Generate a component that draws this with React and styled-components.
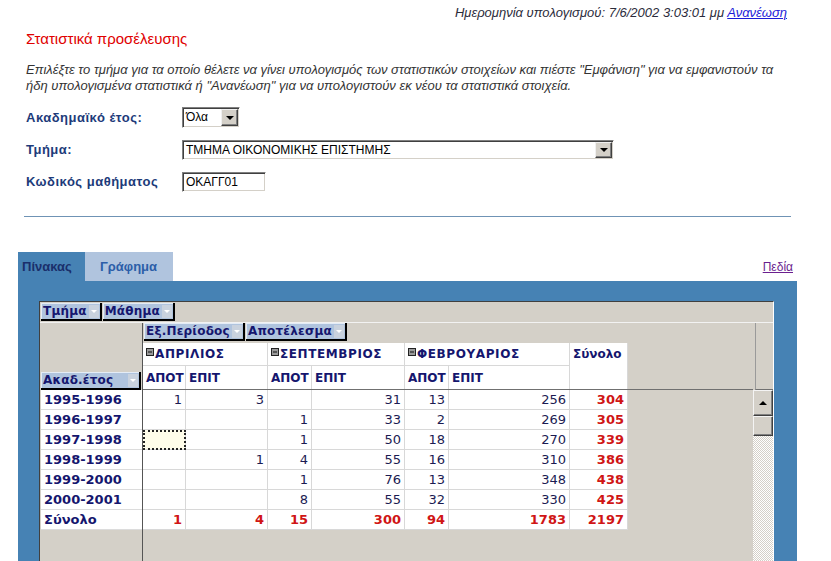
import React from "react";
import styled, { createGlobalStyle } from "styled-components";

const NAVY = "#15166e";
const RED = "#d01515";

const GlobalStyle = createGlobalStyle`
  html, body { margin: 0; padding: 0; background: #fff; }
  body {
    font-family: "Liberation Sans", Arial, sans-serif;
    font-size: 12px;
    color: #333;
    overflow: hidden;
  }
`;

const Page = styled.div`
  width: 779px;
  padding-left: 18px;
`;

const Top = styled.div`
  padding: 5px 10px 0 8px;
`;

const DateLine = styled.div`
  text-align: right;
  font-style: italic;
  font-size: 13px;
  line-height: 16px;
  color: #2b2b3b;
`;

const Link = styled.a`
  color: ${(p) => (p.$visited ? "#6b1f8f" : "#1b1bd8")};
  text-decoration: underline;
  font-style: ${(p) => (p.$visited ? "normal" : "inherit")};
  cursor: pointer;
`;

const Title = styled.div`
  margin-top: 10px;
  color: #e00000;
  font-size: 15px;
  line-height: 16px;
`;

const Intro = styled.p`
  margin: 15px 0 0;
  font-style: italic;
  font-size: 13px;
  line-height: 16px;
  color: #333;
  white-space: nowrap;
`;

const Form = styled.div`
  margin-top: 13px;
  display: grid;
  grid-template-columns: 156px auto;
  grid-auto-rows: 21px;
  row-gap: 11px;
  align-items: center;
  justify-items: start;
`;

const Label = styled.div`
  font-size: 13px;
  font-weight: bold;
  letter-spacing: 0.5px;
  color: #1d3b7a;
  line-height: 21px;
`;

const SelectBox = styled.div`
  display: flex;
  align-items: stretch;
  box-sizing: border-box;
  width: ${(p) => p.$width}px;
  height: ${(p) => p.$height || 21}px;
  background: #fff;
  border-top: 1px solid #808080;
  border-left: 1px solid #808080;
  border-right: 1px solid #fff;
  border-bottom: 1px solid #fff;
  box-shadow: inset 1px 1px 0 #404040, inset -1px -1px 0 #d4d0c8;
`;

const SelectText = styled.span`
  flex: 1;
  padding: 0 3px;
  line-height: ${(p) => (p.$height || 21) - 2}px;
  font-size: 12px;
  color: #000;
  white-space: nowrap;
  overflow: hidden;
`;

const SelectButton = styled.span`
  width: 17px;
  margin: 1px;
  box-sizing: border-box;
  background: #d4d0c8;
  border-top: 1px solid #f0f0f0;
  border-left: 1px solid #f0f0f0;
  border-right: 1px solid #404040;
  border-bottom: 1px solid #404040;
  box-shadow: inset -1px -1px 0 #808080;
  display: flex;
  align-items: center;
  justify-content: center;
  &::after {
    content: "";
    border-left: 4px solid transparent;
    border-right: 4px solid transparent;
    border-top: 4px solid #000;
    margin-top: 1px;
  }
`;

const Rule = styled.hr`
  margin: 24px 6px 0;
  border: 0;
  border-top: 1px solid #6f93b5;
  height: 0;
`;

const TabRow = styled.div`
  margin-top: 35px;
  display: flex;
  align-items: center;
  justify-content: space-between;
  padding-right: 4px;
`;

const Tabs = styled.div`
  display: flex;
`;

const Tab = styled.div`
  box-sizing: border-box;
  width: ${(p) => p.$width}px;
  height: 29px;
  padding-left: ${(p) => p.$pad}px;
  line-height: 30px;
  font-size: 13px;
  font-weight: bold;
  background: ${(p) => (p.$active ? "#4682b4" : "#b0c4de")};
  color: ${(p) => (p.$active ? "#1a2f6b" : "#2c5ea8")};
`;

const Panel = styled.div`
  background: #4682b4;
  padding: 20px 23px 0 21px;
`;

const Frame = styled.div`
  height: 300px;
  background: #d4d0c8;
  border-top: 1px solid #404040;
  border-left: 1px solid #404040;
  border-right: 1px solid #fff;
  display: flex;
  flex-direction: column;
`;

const FilterBar = styled.div`
  box-sizing: border-box;
  height: 21px;
  padding: 1px 0 0 1px;
  border-bottom: 1px solid #f2f2f2;
  display: flex;
  gap: 1px;
  align-items: flex-start;
  flex: none;
`;

const FieldButton = styled.div`
  display: flex;
  align-items: center;
  justify-content: ${(p) => (p.$fill ? "space-between" : "flex-start")};
  width: ${(p) => (p.$fill ? `${p.$fill}px` : "auto")};
  box-sizing: border-box;
  height: 18px;
  padding: 0 1px 0 2px;
  background: #b0c4de;
  color: ${NAVY};
  font-family: "DejaVu Sans", Verdana, sans-serif;
  font-size: 12px;
  font-weight: bold;
  letter-spacing: 0.2px;
  border-right: 2px solid #000;
  border-bottom: 2px solid #000;
  box-shadow: inset 1px 1px 0 #e4ecf6;
  white-space: nowrap;
`;

const FieldArrow = styled.span`
  width: 10px;
  height: 13px;
  margin-left: 2px;
  background: #c9d2de;
  display: flex;
  align-items: center;
  justify-content: center;
  &::after {
    content: "";
    border-left: 3px solid transparent;
    border-right: 3px solid transparent;
    border-top: 3px solid #fff;
  }
`;

const Body = styled.div`
  flex: 1;
  display: flex;
`;

const LeftCol = styled.div`
  width: 103px;
  box-sizing: border-box;
  padding-left: 1px;
  border-right: 1px solid #555;
  flex: none;
`;

const LeftHead = styled.div`
  height: 67px;
  display: flex;
  align-items: flex-end;
`;

const RowLabel = styled.div`
  box-sizing: border-box;
  height: 20px;
  width: 101px;
  padding-left: 3px;
  background: #fff;
  border-bottom: 1px solid #dcdcdc;
  font-family: "DejaVu Sans", Verdana, sans-serif;
  font-size: 13px;
  font-weight: bold;
  line-height: 20px;
  color: ${NAVY};
  white-space: nowrap;
`;

const RightCol = styled.div`
  flex: 1;
`;

const RightHead = styled.div`
  height: 66px;
  border-bottom: 1px solid #707070;
`;

const FieldRow = styled.div`
  height: 20px;
  padding-left: 1px;
  display: flex;
  gap: 1px;
`;

const COLS = "43px 82px 44px 93px 44px 121px 58px";

const HeadGrid = styled.div`
  display: grid;
  grid-template-columns: ${COLS};
  grid-template-rows: 23px 23px;
  width: 485px;
`;

const HeadCell = styled.div`
  box-sizing: border-box;
  background: #fff;
  grid-column: span ${(p) => p.$span || 1};
  grid-row: span ${(p) => p.$rows || 1};
  padding-left: 3px;
  border-right: 1px solid #d8d8d8;
  border-bottom: ${(p) => (p.$bottom ? "1px solid #d8d8d8" : "none")};
  display: flex;
  align-items: ${(p) => (p.$rows ? "flex-start" : "center")};
  padding-top: ${(p) => (p.$rows ? "4px" : "0")};
  font-family: "DejaVu Sans", Verdana, sans-serif;
  font-size: 12px;
  font-weight: bold;
  letter-spacing: ${(p) => (p.$span ? "0.6px" : "0")};
  color: ${NAVY};
  white-space: nowrap;
`;

const Collapse = styled.svg`
  width: 8px;
  height: 8px;
  margin-right: 1px;
  align-self: flex-start;
  margin-top: 5px;
  flex: none;
`;

const DataGrid = styled.div`
  display: grid;
  grid-template-columns: ${COLS};
  grid-auto-rows: 20px;
  width: 485px;
`;

const DataCell = styled.div`
  box-sizing: border-box;
  background: ${(p) => (p.$focus ? "#fffdea" : "#fff")};
  border-right: 1px solid #d8d8d8;
  border-bottom: 1px solid #d8d8d8;
  padding-right: 3px;
  text-align: right;
  line-height: 19px;
  font-family: "DejaVu Sans", Verdana, sans-serif;
  font-size: 13px;
  font-weight: ${(p) => (p.$total ? "bold" : "normal")};
  color: ${(p) => (p.$total ? RED : "#1b1b52")};
  outline: ${(p) => (p.$focus ? "2px dotted #222" : "none")};
  outline-offset: -2px;
`;

const ScrollCol = styled.div`
  width: 20px;
  flex: none;
  display: flex;
  flex-direction: column;
`;

const ScrollHead = styled.div`
  height: 66px;
  margin-left: 2px;
  border-left: 1px solid #9a9a9a;
  border-bottom: 1px solid #707070;
  flex: none;
`;

const ScrollBtn = styled.div`
  box-sizing: border-box;
  height: ${(p) => p.$h}px;
  background: #d4d0c8;
  border-top: 1px solid #f4f4f4;
  border-left: 1px solid #f4f4f4;
  border-right: 1px solid #404040;
  border-bottom: 1px solid #404040;
  box-shadow: inset -1px -1px 0 #808080;
  display: flex;
  align-items: center;
  justify-content: center;
  flex: none;
  ${(p) =>
    p.$arrow &&
    `&::after {
      content: "";
      border-left: 4px solid transparent;
      border-right: 4px solid transparent;
      border-bottom: 4px solid #000;
    }`}
`;

const ScrollTrack = styled.div`
  flex: 1;
  background: repeating-conic-gradient(#d4d0c8 0 25%, #ffffff 0 50%) 0 0 / 2px 2px;
`;

const months = ["ΑΠΡΙΛΙΟΣ", "ΣΕΠΤΕΜΒΡΙΟΣ", "ΦΕΒΡΟΥΑΡΙΟΣ"];

const rows = [
  ["1995-1996", [1, 3, "", 31, 13, 256, 304]],
  ["1996-1997", ["", "", 1, 33, 2, 269, 305]],
  ["1997-1998", ["", "", 1, 50, 18, 270, 339]],
  ["1998-1999", ["", 1, 4, 55, 16, 310, 386]],
  ["1999-2000", ["", "", 1, 76, 13, 348, 438]],
  ["2000-2001", ["", "", 8, 55, 32, 330, 425]],
  ["Σύνολο", [1, 4, 15, 300, 94, 1783, 2197]],
];

function Field({ children, fill }) {
  return (
    <FieldButton $fill={fill}>
      <span>{children}</span>
      <FieldArrow />
    </FieldButton>
  );
}

function Select({ value, width, height, button }) {
  return (
    <SelectBox $width={width} $height={height}>
      <SelectText $height={height}>{value}</SelectText>
      {button ? <SelectButton /> : null}
    </SelectBox>
  );
}

export default function App() {
  return (
    <Page>
      <GlobalStyle />
      <Top>
        <DateLine>
          Ημερομηνία υπολογισμού: 7/6/2002 3:03:01 μμ <Link>Ανανέωση</Link>
        </DateLine>
        <Title>Στατιστικά προσέλευσης</Title>
        <Intro>
          Επιλέξτε το τμήμα για τα οποίο θέλετε να γίνει υπολογισμός των στατιστικών στοιχείων και πιέστε "Εμφάνιση" για να εμφανιστούν τα
          <br />
          ήδη υπολογισμένα στατιστικά ή "Ανανέωση" για να υπολογιστούν εκ νέου τα στατιστικά στοιχεία.
        </Intro>
        <Form>
          <Label>Ακαδημαϊκό έτος:</Label>
          <Select value="Όλα" width={58} button />
          <Label>Τμήμα:</Label>
          <Select value="ΤΜΗΜΑ ΟΙΚΟΝΟΜΙΚΗΣ ΕΠΙΣΤΗΜΗΣ" width={432} height={20} button />
          <Label>Κωδικός μαθήματος</Label>
          <Select value="ΟΚΑΓΓ01" width={84} height={20} />
        </Form>
      </Top>
      <Rule />
      <TabRow>
        <Tabs>
          <Tab $active $width={67} $pad={4}>Πίνακας</Tab>
          <Tab $width={88} $pad={15}>Γράφημα</Tab>
        </Tabs>
        <Link $visited>Πεδία</Link>
      </TabRow>
      <Panel>
        <Frame>
          <FilterBar>
            <Field>Τμήμα</Field>
            <Field>Μάθημα</Field>
          </FilterBar>
          <Body>
            <LeftCol>
              <LeftHead>
                <Field fill={100}>Ακαδ.έτος</Field>
              </LeftHead>
              {rows.map(([label]) => (
                <RowLabel key={label}>{label}</RowLabel>
              ))}
            </LeftCol>
            <RightCol>
              <RightHead>
                <FieldRow>
                  <Field>Εξ.Περίοδος</Field>
                  <Field>Αποτέλεσμα</Field>
                </FieldRow>
                <HeadGrid>
                  {months.map((m) => (
                    <HeadCell key={m} $span={2} $bottom>
                      <Collapse viewBox="0 0 8 8">
                        <rect x="0.5" y="0.5" width="7" height="7" fill="#9a9a9a" stroke="#222" />
                        <line x1="2" y1="4" x2="6" y2="4" stroke="#111" strokeWidth="1" />
                      </Collapse>
                      {m}
                    </HeadCell>
                  ))}
                  <HeadCell $rows={2}>Σύνολο</HeadCell>
                  {months.map((m) => (
                    <React.Fragment key={m + "-sub"}>
                      <HeadCell>ΑΠΟΤ</HeadCell>
                      <HeadCell>ΕΠΙΤ</HeadCell>
                    </React.Fragment>
                  ))}
                </HeadGrid>
              </RightHead>
              <DataGrid>
                {rows.map(([label, vals], r) =>
                  vals.map((v, c) => (
                    <DataCell
                      key={label + c}
                      $total={r === rows.length - 1 || c === vals.length - 1}
                      $focus={r === 2 && c === 0}
                    >
                      {v}
                    </DataCell>
                  ))
                )}
              </DataGrid>
            </RightCol>
            <ScrollCol>
              <ScrollHead />
              <ScrollBtn $h={26} $arrow />
              <ScrollBtn $h={20} />
              <ScrollTrack />
            </ScrollCol>
          </Body>
        </Frame>
      </Panel>
    </Page>
  );
}
